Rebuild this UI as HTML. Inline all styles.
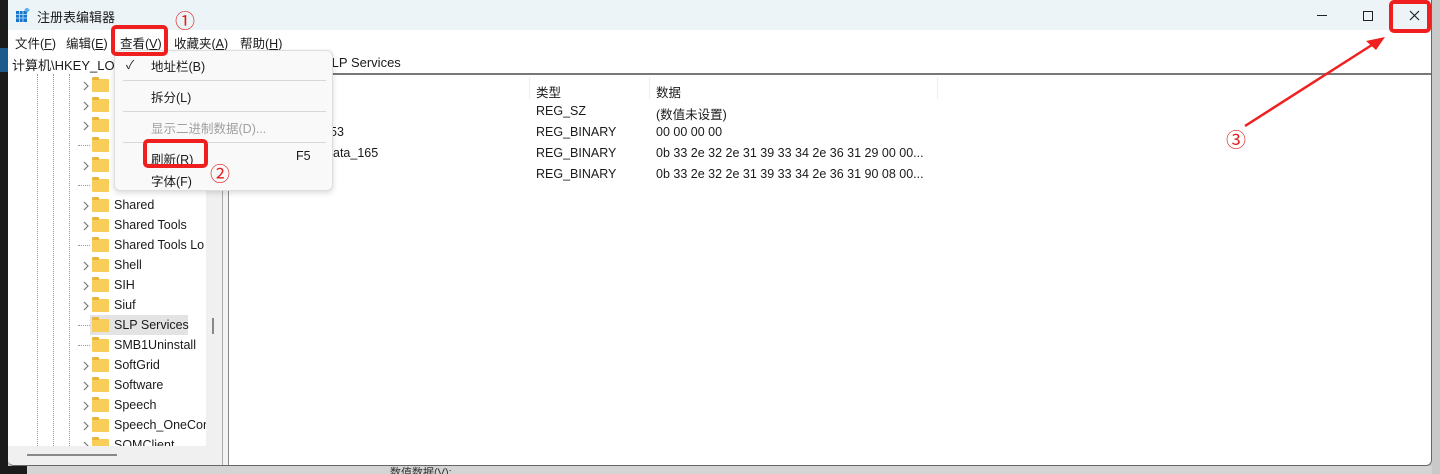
<!DOCTYPE html>
<html><head><meta charset="utf-8"><style>
*{margin:0;padding:0;box-sizing:border-box}
html,body{width:1440px;height:474px;overflow:hidden}
body{background:#c9c9c9;position:relative;font-family:"Liberation Sans","Noto Sans CJK SC",sans-serif;font-size:12.5px;color:#1a1a1a}
.abs{position:absolute}
.win{left:8px;top:0;width:1424px;height:466px;background:#fff;border:1px solid #666;border-top:none;border-left:none;border-radius:0 0 6px 6px;overflow:hidden}
.title{left:0;top:0;width:1424px;height:30px;background:#edf4f7}
.menu{left:0;top:30px;width:1424px;height:20px;background:#fff}
.menu span{position:absolute;top:3px}
.addr{left:0;top:52px;width:1424px;height:21px;background:#fff}
.row{position:absolute;height:20px;line-height:20px;font-size:12.5px}
.fold{position:absolute;top:4px;width:17px;height:13px;background:#f8cd5a;border-radius:1px}
.fold:before{content:"";position:absolute;left:0;top:-2px;width:7px;height:3px;background:#e8b53a;border-radius:1px 1px 0 0}
.vl{position:absolute;top:74px;height:372px;border-left:1px dotted #999}
.right{left:220px;top:73px;width:1204px;height:393px;border-top:2px solid #777;border-left:1px solid #888;background:#fff}
.menu-pop{left:114px;top:50px;width:219px;height:141px;background:#f9f9f9;border:1px solid #ddd;border-radius:6px;box-shadow:0 2px 6px rgba(0,0,0,.15)}
.menu-pop div{position:absolute;left:36px}
.sep{position:absolute;left:8px!important;width:203px;height:1px;background:#d8d8d8}
</style></head><body>
<div class="abs" style="left:0;top:0;width:8px;height:474px;background:#1b1b1b"></div>
<div class="abs" style="left:0;top:466px;width:27px;height:8px;background:#1b1b1b"></div>
<div class="abs" style="left:0;top:48px;width:8px;height:24px;background:#1e5a8c"></div>
<div class="abs win">
  <div class="abs title">
    <svg class="abs" style="left:8px;top:8px" width="14" height="14"><rect x="0" y="3" width="11" height="11" fill="#1a73c9"/><path d="M0 6.5h11M0 10h11M3.5 3v11M7 3v11" stroke="#9cd0f5" stroke-width="1"/><rect x="9" y="0" width="4" height="4" fill="#5ab0ea" transform="rotate(45 11 2)"/></svg>
    <span class="abs" style="left:29px;top:7px;font-size:13px">注册表编辑器</span>
    <svg class="abs" style="left:1306px;top:9px" width="110" height="14"><path d="M3 6.5h10" stroke="#222"/><rect x="49.5" y="2.5" width="9" height="9" fill="none" stroke="#222"/><path d="M96 2l9 9M105 2l-9 9" stroke="#222" stroke-width="1.2"/></svg>
  </div>
  <div class="abs menu">
    <span style="left:7px">文件(<u>F</u>)</span><span style="left:58px">编辑(<u>E</u>)</span><span style="left:112px">查看(<u>V</u>)</span><span style="left:166px">收藏夹(<u>A</u>)</span><span style="left:232px">帮助(<u>H</u>)</span>
  </div>
  <div class="abs addr"><span class="abs" style="left:4px;top:3px;font-size:13px">计算机\HKEY_LOC</span><span class="abs" style="left:315px;top:3px;font-size:13px">SLP Services</span></div>
  <div class="abs" style="left:0;top:74px;width:198px;height:372px;background:#fff"></div>
  <div class="abs" style="left:198px;top:74px;width:16px;height:392px;background:#f0f0f0"></div>
  <div class="abs" style="left:214px;top:74px;width:1px;height:392px;background:#aaa"></div>
  <div class="abs" style="left:215px;top:74px;width:5px;height:392px;background:#f3f3f3"></div>
  <div class="abs" style="left:204px;top:318px;width:2px;height:16px;background:#888"></div>
  <div class="vl" style="left:29px"></div><div class="vl" style="left:45px"></div><div class="vl" style="left:61px"></div>
  <div id="rows"></div>
  <div class="abs" style="left:0;top:446px;width:214px;height:20px;background:#f0f0f0"></div>
  <div class="abs" style="left:19px;top:454px;width:90px;height:2px;background:#888"></div>
  <div class="abs right">
    <span class="abs" style="left:307px;top:7px">类型</span><span class="abs" style="left:427px;top:7px">数据</span>
    <div class="abs" style="left:300px;top:2px;width:1px;height:22px;background:#eee"></div>
    <div class="abs" style="left:420px;top:2px;width:1px;height:22px;background:#eee"></div>
    <div class="abs" style="left:708px;top:2px;width:1px;height:22px;background:#eee"></div>
    <span class="abs" style="left:307px;top:29px">REG_SZ</span><span class="abs" style="left:427px;top:29px">(数值未设置)</span>
    <span class="abs" style="left:101px;top:50px">53</span><span class="abs" style="left:307px;top:50px">REG_BINARY</span><span class="abs" style="left:427px;top:50px">00 00 00 00</span>
    <span class="abs" style="left:104px;top:71px">ata_165</span><span class="abs" style="left:307px;top:71px">REG_BINARY</span><span class="abs" style="left:427px;top:71px">0b 33 2e 32 2e 31 39 33 34 2e 36 31 29 00 00...</span>
    <span class="abs" style="left:307px;top:92px">REG_BINARY</span><span class="abs" style="left:427px;top:92px">0b 33 2e 32 2e 31 39 33 34 2e 36 31 90 08 00...</span>
  </div>
</div>
<div class="abs" style="left:27px;top:466px;width:1405px;height:8px;background:#d4d4d4"></div>
<span class="abs" style="left:390px;top:464px;font-size:11px;color:#333">数值数据(<u>V</u>):</span>
<div class="abs menu-pop">
  <span class="abs" style="left:11px;top:5px;font-size:12px">✓</span>
  <div style="top:5px">地址栏(B)</div>
  <div class="sep" style="top:29px"></div>
  <div style="top:36px">拆分(L)</div>
  <div class="sep" style="top:60px"></div>
  <div style="top:67px;color:#a0a0a0">显示二进制数据(D)...</div>
  <div class="sep" style="top:91px"></div>
  <div style="top:98px">刷新(R)</div>
  <div style="top:98px;left:181px!important">F5</div>
  <div style="top:120px">字体(F)</div>
</div>
<svg class="abs" style="left:0;top:0" width="1440" height="474">
  <rect x="113" y="27" width="53" height="27" rx="3" fill="none" stroke="#f01f1f" stroke-width="4"/>
  <rect x="145" y="141" width="61" height="25" rx="3" fill="none" stroke="#f01f1f" stroke-width="4"/>
  <rect x="1391" y="2" width="38" height="29" rx="3" fill="none" stroke="#f01f1f" stroke-width="4"/>
  <path d="M1245 126L1375 43" stroke="#f02020" stroke-width="2.5"/>
  <path d="M1385 37L1366 41L1376 50Z" fill="#f02020"/>
  <text x="175" y="28" font-size="20" fill="#e02020" font-family="Noto Sans CJK SC">①</text>
  <text x="210" y="181" font-size="20" fill="#e02020" font-family="Noto Sans CJK SC">②</text>
  <text x="1226" y="147" font-size="20" fill="#e02020" font-family="Noto Sans CJK SC">③</text>
</svg>
<script>
var items=["","","","","","","Shared","Shared Tools","Shared Tools Lo","Shell","SIH","Siuf","SLP Services","SMB1Uninstall","SoftGrid","Software","Speech","Speech_OneCor","SQMClient"];
var noArr={3:1,5:1,8:1,12:1,13:1};var h="";
items.forEach(function(t,i){var y=75+20*i;if(y>446)return;
if(i==12)h+='<div class="abs" style="left:82px;top:'+y+'px;width:98px;height:20px;background:#e3e3e3"></div>';
h+=(noArr[i]?'<div class="abs" style="left:70px;top:'+(y+10)+'px;width:12px;border-top:1px dotted #999"></div>':'<svg class="abs" style="left:74px;top:'+(y+6)+'px" width="8" height="10"><path d="M2 1l4 4-4 4" stroke="#777" fill="none" stroke-width="1.2"/></svg>');
h+='<div class="row" style="top:'+y+'px;left:84px;width:114px;overflow:hidden"><span class="fold" style="left:0"></span><span style="position:absolute;left:22px;white-space:nowrap">'+t+'</span></div>';});
document.getElementById("rows").outerHTML=h;
</script>
</body></html>
